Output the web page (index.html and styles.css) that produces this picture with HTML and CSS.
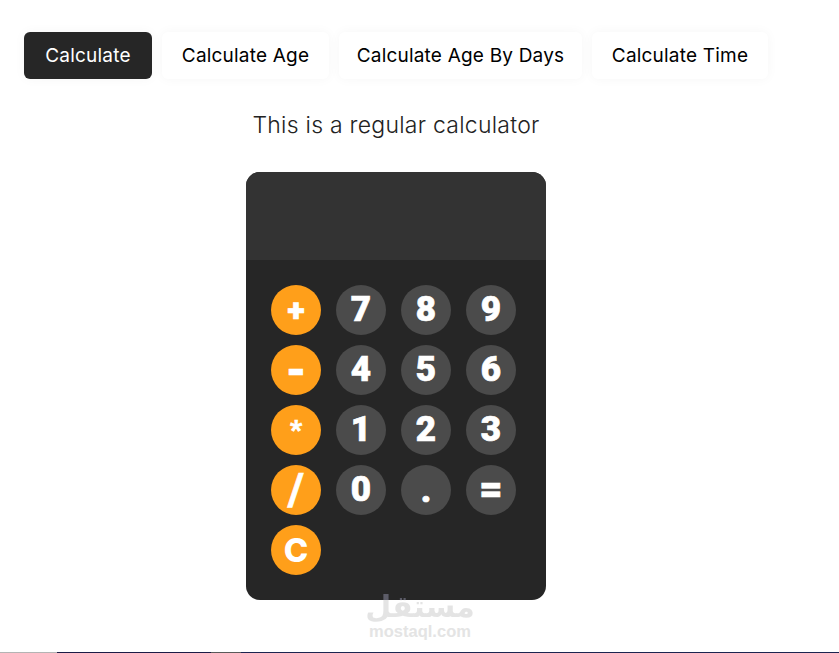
FILE: index.html
```html
<!DOCTYPE html>
<html lang="en">
    <head>
        <meta charset="utf-8">
        <meta name="viewport" content="width=device-width, initial-scale=1.0">
        <title>Calculator</title>
        <link rel="stylesheet" href="styles.css">
    </head>
    <body>
        <main class="app">
            <nav class="tabs">
                <button class="tab active">Calculate</button>
                <button class="tab">Calculate Age</button>
                <button class="tab">Calculate Age By Days</button>
                <button class="tab">Calculate Time</button>
            </nav>
            <p class="intro">This is a regular calculator</p>
            <section class="calculator">
                <div class="display"></div>
                <div class="keys">
                    <button class="key op"><span class="plus">+</span></button>
                    <button class="key">7</button>
                    <button class="key">8</button>
                    <button class="key">9</button>
                    <button class="key op"><span class="minus">-</span></button>
                    <button class="key">4</button>
                    <button class="key">5</button>
                    <button class="key">6</button>
                    <button class="key op"><span class="star">*</span></button>
                    <button class="key">1</button>
                    <button class="key">2</button>
                    <button class="key">3</button>
                    <button class="key op"><span class="slash">/</span></button>
                    <button class="key">0</button>
                    <button class="key"><span class="dot">.</span></button>
                    <button class="key"><span class="equals">=</span></button>
                    <button class="key op"><span class="clear">C</span></button>
                </div>
            </section>
        </main>
        <div class="watermark">
            <span class="watermark-ar" lang="ar" dir="rtl">مستقل</span>
            <span class="watermark-en">mostaql.com</span>
        </div>
        <div class="taskbar">
            <span class="strip-a"></span>
            <span class="strip-b"></span>
            <span class="strip-c"></span>
            <span class="strip-d"></span>
        </div>
    </body>
</html>
```

FILE: styles.css
```css
html, body {
    margin: 0;
    padding: 0;
    height: 100%;
    overflow: hidden;
}
body {
    font-family: Inter, "Open Sans", sans-serif;
    background: #fff;
    color: #000;
}
button {
    font: inherit;
    border: 0;
    cursor: pointer;
}
.app {
    width: 744px;
    margin-left: 24px;
    padding-top: 32px;
}
.tabs {
    display: flex;
    gap: 10px;
}
.tab {
    height: 47px;
    flex: none;
    padding: 0;
    font-size: 19px;
    letter-spacing: .2px;
    color: #000;
    background: #fff;
    border-radius: 6px;
    box-shadow: 0 0 12px rgba(0, 0, 0, .04);
}
.tab:nth-child(1) { width: 128px; }
.tab:nth-child(2) { width: 167px; }
.tab:nth-child(3) { width: 243px; }
.tab:nth-child(4) { width: 176px; }
.tab.active {
    background: #262626;
    color: #fff;
}
.intro {
    margin: 31px 0 32px;
    text-align: center;
    font-size: 23px;
    font-weight: 300;
    letter-spacing: .25px;
    line-height: 30px;
    color: #222;
}
.calculator {
    width: 300px;
    margin: 0 auto;
    border-radius: 14px;
    overflow: hidden;
    background: #262626;
}
.display {
    height: 88px;
    background: #333;
}
.keys {
    display: grid;
    grid-template-columns: repeat(4, 50px);
    column-gap: 15px;
    row-gap: 10px;
    padding: 25px;
}
.key {
    width: 50px;
    height: 50px;
    padding: 0;
    border-radius: 50%;
    background: #4b4b4b;
    color: #fff;
    font-family: Roboto, sans-serif;
    font-size: 35px;
    font-weight: 900;
    line-height: 50px;
    /* Roboto Black is still lighter than the reference digits */
    -webkit-text-stroke: .7px #fff;
}
.key.op {
    background: #ff9f1a;
}
.key span {
    display: block;
    line-height: 50px;
}
.key .plus {
    font-size: 32px;
    line-height: 48px;
}
.key .minus {
    font-size: 46px;
    line-height: 44px;
}
.key .star {
    font-size: 26px;
    line-height: 40px;
}
.key .slash {
    font-size: 44px;
    font-weight: 700;
}
.key .dot {
    line-height: 52px;
}
.key .equals {
    font-size: 40px;
}
.key .clear {
    font-family: Inter, sans-serif;
    font-size: 33px;
    font-weight: 800;
    -webkit-text-stroke: 0;
}
.watermark {
    position: absolute;
    left: 354px;
    top: 590px;
    width: 132px;
    display: flex;
    flex-direction: column;
    align-items: center;
    color: #e4e4e4;
    pointer-events: none;
}
.watermark-ar {
    font-family: "DejaVu Sans", sans-serif;
    font-size: 30px;
    font-weight: 700;
    line-height: 33px;
    /* the top of the mark sits over the dark panel */
    color: transparent;
    background: linear-gradient(#5c5c68 10px, #e4e4e4 10px);
    -webkit-background-clip: text;
    background-clip: text;
}
.watermark-en {
    font-family: "Liberation Sans", sans-serif;
    font-size: 16.5px;
    font-weight: 700;
    line-height: 16px;
}
.taskbar {
    position: absolute;
    left: 0;
    right: 0;
    bottom: 0;
    height: 1px;
    display: flex;
}
.strip-a { width: 57px; background: #b4b4b4; }
.strip-b { width: 154px; background: #1b1b46; }
.strip-c { width: 30px; background: #5a5a5a; }
.strip-d { flex: 1; background: #1c2450; }
```
